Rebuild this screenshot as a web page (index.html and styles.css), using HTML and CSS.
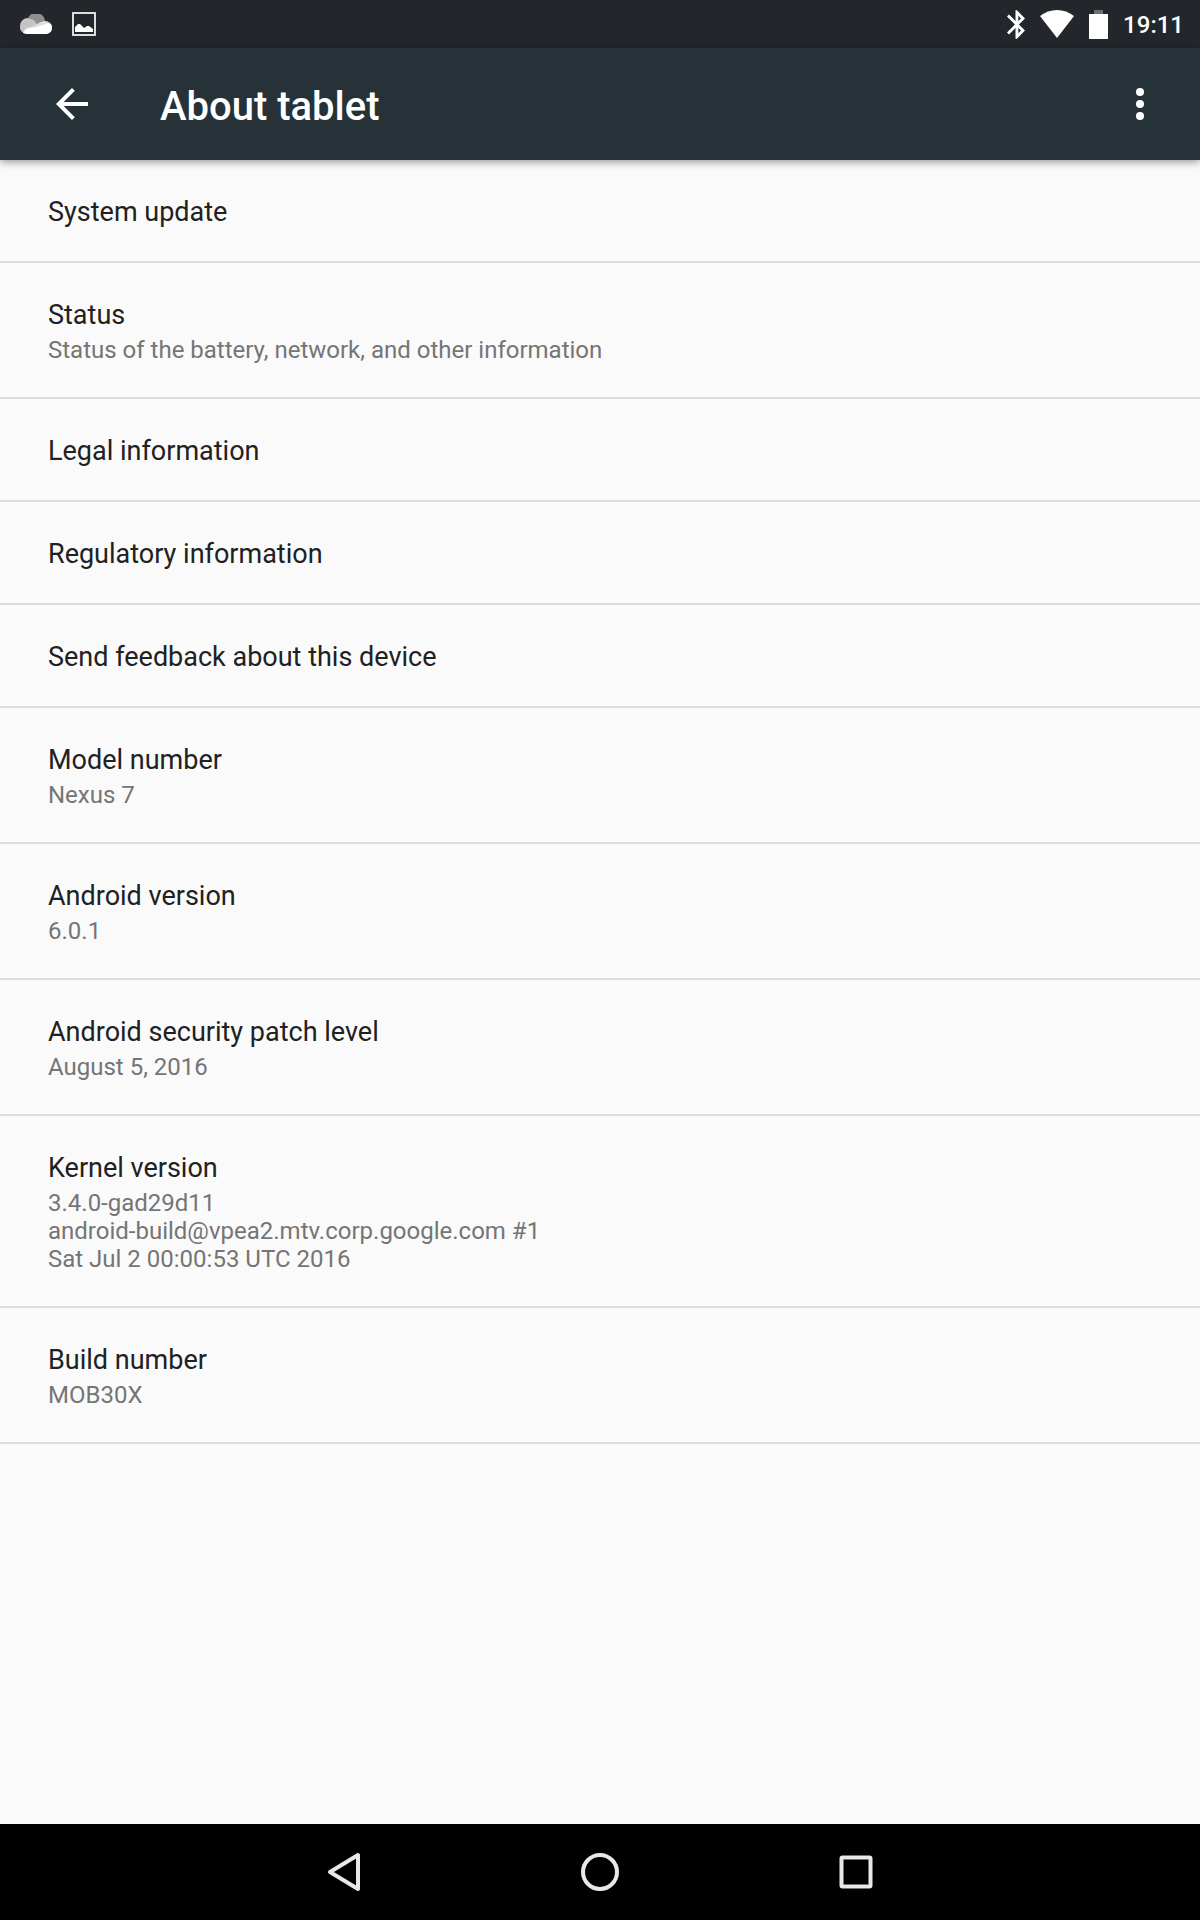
FILE: index.html
```html
<!DOCTYPE html>
<html lang="en">
<head>
<meta charset="utf-8">
<meta name="viewport" content="width=device-width, initial-scale=1">
<title>About tablet</title>
<link rel="stylesheet" href="styles.css">
</head>
<body>
<div class="status-bar">
  <div class="notifications">
    <svg class="icon" width="32" height="20" viewBox="0 0 32 20" aria-hidden="true">
      <path fill="#c4c4c5" d="M7 20a7 7 0 0 1-7-8 8 8 0 0 1 8-8c5 0 8 3 10 7l-4 9z"/>
      <path fill="#8f9092" d="M8 4a9 9 0 0 1 17 3c-4 0-6 1-8 3-2-4-5-6-9-6z"/>
      <path fill="#dedede" d="M3 19c1-4 4-6 8-6l6-3c2-2 5-3 8-3a7 7 0 0 1 5 2L16 18z"/>
      <path fill="#fff" d="M3 19c2-3 4-5 8-5 7-1 13-4 19-5 2 2 2 3 2 5 0 4-3 6-7 6H7z"/>
    </svg>
    <svg class="icon" width="24" height="24" viewBox="0 0 24 24" aria-hidden="true">
      <rect x="1" y="1" width="22" height="22" fill="none" stroke="#dcdcde" stroke-width="2"/>
      <path fill="#fff" d="M3 20v-5l3-3h2l4 4 3-2h2l4 3v3z"/>
    </svg>
  </div>
  <div class="system">
    <svg class="icon" width="18" height="29" viewBox="5 2 12.7 20" aria-hidden="true">
      <path fill="#fff" d="M17.71 7.71 12 2h-1v7.59L6.41 5 5 6.41 10.59 12 5 17.59 6.41 19 11 14.41V22h1l5.71-5.71L13.41 12zM13 5.83l1.88 1.88L13 9.59zm1.88 10.46L13 18.17v-3.76z"/>
    </svg>
    <svg class="icon" width="34" height="28" viewBox="0 0 34 28" aria-hidden="true">
      <path fill="#fff" d="M17 28 0 6C10-2 24-2 34 6z"/>
    </svg>
    <svg class="icon" width="19" height="29" viewBox="0 0 19 29" aria-hidden="true">
      <path fill="#6c6f72" d="M5 0h9v4H5z"/>
      <path fill="#fff" d="M0 4h19v25H0z"/>
    </svg>
    <time class="clock">19:11</time>
  </div>
</div>

<header class="app-bar">
  <button class="icon-button" type="button" aria-label="Navigate up">
    <svg class="icon" width="48" height="48" viewBox="0 0 24 24"><path fill="#fff" d="M20 11H7.83l5.59-5.59L12 4l-8 8 8 8 1.41-1.41L7.83 13H20z"/></svg>
  </button>
  <h1 class="title">About tablet</h1>
  <button class="icon-button" type="button" aria-label="More options">
    <svg class="icon" width="48" height="48" viewBox="0 0 24 24" fill="#fff"><circle cx="12" cy="6" r="2"/><circle cx="12" cy="12" r="2"/><circle cx="12" cy="18" r="2"/></svg>
  </button>
</header>

<main class="content">
  <ul class="list">
    <li><a class="item" href="#update"><span class="name">System update</span></a></li>
    <li><a class="item" href="#status"><span class="name">Status</span><span class="summary">Status of the battery, network, and other information</span></a></li>
    <li><a class="item" href="#legal"><span class="name">Legal information</span></a></li>
    <li><a class="item" href="#regulatory"><span class="name">Regulatory information</span></a></li>
    <li><a class="item" href="#feedback"><span class="name">Send feedback about this device</span></a></li>
    <li class="item"><span class="name">Model number</span><span class="summary">Nexus 7</span></li>
    <li class="item"><span class="name">Android version</span><span class="summary">6.0.1</span></li>
    <li class="item"><span class="name">Android security patch level</span><span class="summary">August 5, 2016</span></li>
    <li class="item"><span class="name">Kernel version</span><span class="summary">3.4.0-gad29d11<br>android-build@vpea2.mtv.corp.google.com #1<br>Sat Jul 2 00:00:53 UTC 2016</span></li>
    <li class="item"><span class="name">Build number</span><span class="summary">MOB30X</span></li>
  </ul>
</main>

<nav class="nav-bar" aria-label="System navigation">
  <button class="nav-button" type="button" aria-label="Back">
    <svg class="icon" width="40" height="40" viewBox="0 0 40 40"><path fill="none" stroke="#e8e8e8" stroke-width="4" stroke-linejoin="round" d="M34 3v34L6 20z"/></svg>
  </button>
  <button class="nav-button" type="button" aria-label="Home">
    <svg class="icon" width="40" height="40" viewBox="0 0 40 40"><circle cx="20" cy="20" r="17" fill="none" stroke="#e8e8e8" stroke-width="4"/></svg>
  </button>
  <button class="nav-button" type="button" aria-label="Overview">
    <svg class="icon" width="40" height="40" viewBox="0 0 40 40"><rect x="5.5" y="5.5" width="29" height="29" rx="1" fill="none" stroke="#e8e8e8" stroke-width="4"/></svg>
  </button>
</nav>
</body>
</html>
```
FILE: styles.css
```css
* {
  box-sizing: border-box;
}

body {
  margin: 0;
  min-height: 100vh;
  display: flex;
  flex-direction: column;
  background: #fafafa;
  color: #212121;
  font-family: Roboto, "Liberation Sans", sans-serif;
}

button {
  border: 0;
  padding: 0;
  background: none;
  cursor: pointer;
}

.icon {
  display: block;
  flex: none;
}

.status-bar {
  display: flex;
  align-items: center;
  justify-content: space-between;
  height: 48px;
  padding: 0 16px 0 20px;
  background: #23272b;
}

.notifications {
  display: flex;
  align-items: center;
  gap: 20px;
}

.system {
  display: flex;
  align-items: center;
  gap: 15px;
}

.clock {
  padding-top: 1px;
  color: #fff;
  font-size: 24px;
  font-weight: 500;
  line-height: 28px;
}

.app-bar {
  display: flex;
  align-items: center;
  height: 112px;
  padding: 0 36px 0 48px;
  background: #263238;
  box-shadow: 0 2px 8px rgba(0, 0, 0, 0.4);
}

.title {
  flex: 1;
  margin: 0;
  padding: 6px 0 0 64px;
  color: #fff;
  font-size: 40px;
  font-weight: 500;
  line-height: 48px;
}

.content {
  flex: 1;
}

.list {
  margin: 0;
  padding: 0;
  list-style: none;
}

.item {
  display: block;
  padding: 34px 48px 30px;
  border-bottom: 2px solid #dcdcdc;
  color: inherit;
  text-decoration: none;
}

.name,
.summary {
  display: block;
}

.name {
  font-size: 27px;
  line-height: 37px;
}

.summary {
  padding: 2px 0 3px;
  color: #757575;
  font-size: 24px;
  line-height: 28px;
}

.nav-bar {
  display: flex;
  justify-content: center;
  height: 96px;
  background: #000;
}

.nav-button {
  display: flex;
  align-items: center;
  justify-content: center;
  width: 256px;
}
```
